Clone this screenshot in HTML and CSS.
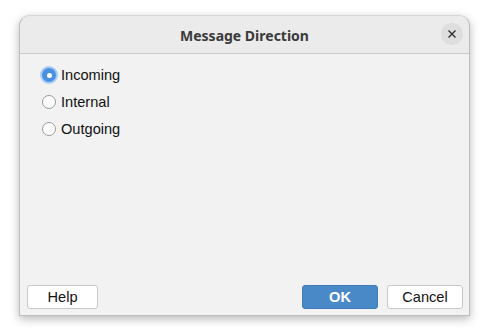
FILE: index.html
```html
<!DOCTYPE html>
<html>
<head>
<meta charset="utf-8">
<link rel="stylesheet" href="styles.css">
</head>
<body>
<div class="dialog">
  <div class="titlebar">
    <div class="title">Message Direction</div>
    <div class="close"><svg width="10" height="10" viewBox="0 0 10 10"><path d="M1.5 1.5 L8.5 8.5 M8.5 1.5 L1.5 8.5" stroke="#2e2e2e" stroke-width="1.4" fill="none"/></svg></div>
  </div>
  <div class="content">
    <div class="options">
      <label class="opt"><span class="radio checked"><span class="dot"></span></span>Incoming</label>
      <label class="opt"><span class="radio"></span>Internal</label>
      <label class="opt"><span class="radio"></span>Outgoing</label>
    </div>
    <div class="buttons">
      <button class="btn help">Help</button>
      <div class="spacer"></div>
      <button class="btn ok">OK</button>
      <button class="btn">Cancel</button>
    </div>
  </div>
</div>
</body>
</html>
```
FILE: styles.css
```css
html, body {
  margin: 0;
  padding: 0;
  background: #ffffff;
}
body {
  padding: 15px 0 0 19px;
  height: 336px;
  box-sizing: border-box;
}
.dialog {
  width: 451px;
  height: 301px;
  box-sizing: border-box;
  background: #f2f2f2;
  border: 1px solid #bdbdbd;
  border-top-color: #d6d6d6;
  border-radius: 11px 11px 0 0;
  box-shadow: 0 3px 10px rgba(0,0,0,0.28);
  display: flex;
  flex-direction: column;
  overflow: hidden;
}
.titlebar {
  height: 37px;
  flex: none;
  background: #ebebeb;
  border-bottom: 1px solid #c9c9c9;
  display: flex;
  align-items: center;
  justify-content: center;
  position: relative;
}
.title {
  font-family: "Noto Sans", sans-serif;
  font-weight: bold;
  font-size: 14px;
  color: #3a3a3a;
  padding-top: 1px;
}
.close {
  position: absolute;
  right: 6px;
  top: 7px;
  width: 22px;
  height: 22px;
  border-radius: 50%;
  background: #dedede;
  display: flex;
  align-items: center;
  justify-content: center;
}
.content {
  flex: 1;
  display: flex;
  flex-direction: column;
  padding: 12px 6px 6px 7px;
}
.options {
  flex: 1;
  display: flex;
  flex-direction: column;
  gap: 9px;
  padding-left: 15px;
}
.opt {
  display: flex;
  align-items: center;
  height: 18px;
  font-family: "Liberation Sans", Arial, sans-serif;
  font-size: 14.6px;
  color: #111;
}
.radio {
  width: 14px;
  height: 14px;
  box-sizing: border-box;
  border: 1px solid #9a9a9a;
  border-radius: 50%;
  background: #ffffff;
  margin: 0 5px 0 0;
  display: flex;
  align-items: center;
  justify-content: center;
}
.radio.checked {
  border: none;
  background: #4a90e2;
  box-shadow: 0 0 0 2px #a9ccf3;
}
.dot {
  width: 5px;
  height: 5px;
  border-radius: 50%;
  background: #ffffff;
}
.buttons {
  display: flex;
  align-items: center;
  gap: 9px;
  height: 24px;
}
.spacer { flex: 1; }
.btn {
  width: 76px;
  height: 24px;
  box-sizing: border-box;
  border: 1px solid #c8c8c8;
  border-radius: 3px;
  background: #ffffff;
  font-family: "Liberation Sans", Arial, sans-serif;
  font-size: 14.6px;
  color: #111;
  padding: 0;
  margin: 0;
}
.btn.help { width: 71px; }
.btn.ok {
  background: #4a89c8;
  border-color: #3f7ab6;
  color: #ffffff;
  font-weight: bold;
}
```
